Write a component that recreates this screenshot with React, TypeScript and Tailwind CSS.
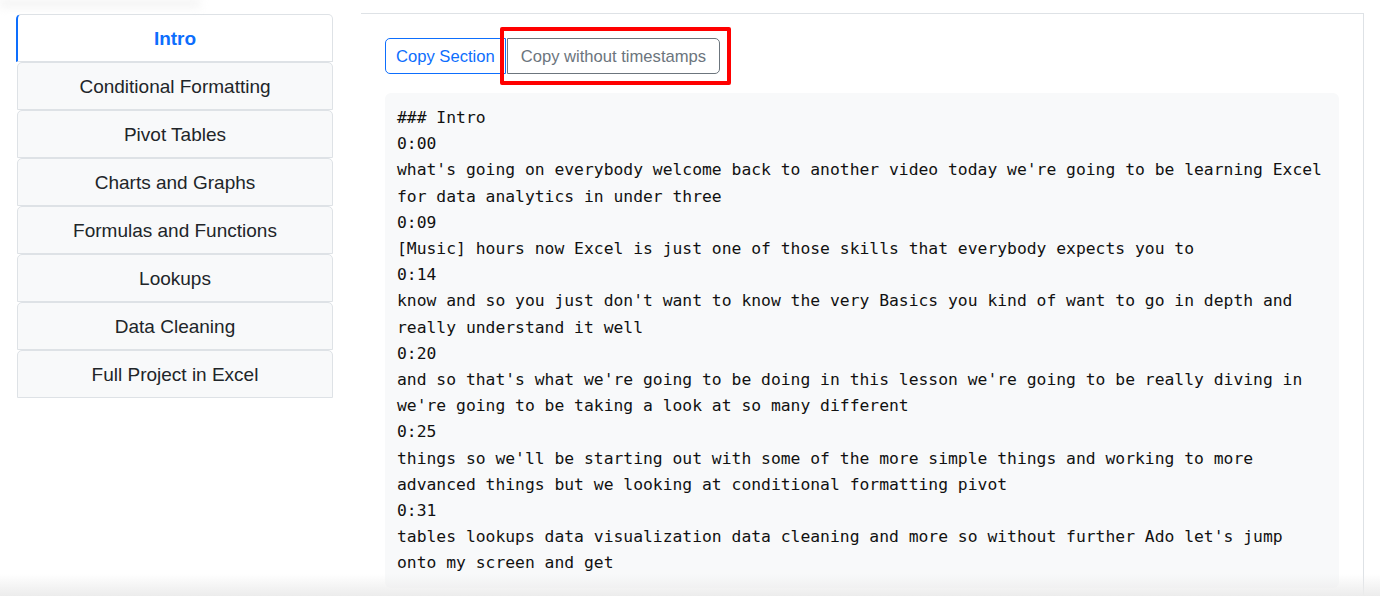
import { useState } from "react";

const sections = [
  "Intro",
  "Conditional Formatting",
  "Pivot Tables",
  "Charts and Graphs",
  "Formulas and Functions",
  "Lookups",
  "Data Cleaning",
  "Full Project in Excel",
];

const transcript = `### Intro
0:00
what's going on everybody welcome back to another video today we're going to be learning Excel
for data analytics in under three
0:09
[Music] hours now Excel is just one of those skills that everybody expects you to
0:14
know and so you just don't want to know the very Basics you kind of want to go in depth and
really understand it well
0:20
and so that's what we're going to be doing in this lesson we're going to be really diving in
we're going to be taking a look at so many different
0:25
things so we'll be starting out with some of the more simple things and working to more
advanced things but we looking at conditional formatting pivot
0:31
tables lookups data visualization data cleaning and more so without further Ado let's jump
onto my screen and get`;

export default function App() {
  const [active, setActive] = useState(0);

  return (
    <div className="relative h-[596px] overflow-hidden bg-white font-['Liberation_Sans',Arial,sans-serif] text-[#212529]">
      {/* faint framing shadows from the screenshot */}
      <div className="pointer-events-none absolute left-0 top-0 h-[10px] w-[200px] bg-gradient-to-b from-[#ececec] to-transparent blur-[4px]" />

      <div className="flex items-start gap-[28px] pl-[16px] pr-[16px] pt-[14px]">
        <nav className="flex w-[317px] shrink-0 flex-col">
          {sections.map((s, i) =>
            i === active ? (
              <button
                key={s}
                onClick={() => setActive(i)}
                className="flex h-[48px] items-center justify-center rounded-t-[5px] border border-l-2 border-[#dee2e6] border-l-[#0d6efd] bg-white pt-[2px] text-[19px] font-bold text-[#0d6efd]"
              >
                {s}
              </button>
            ) : (
              <button
                key={s}
                onClick={() => setActive(i)}
                className="ml-[1px] flex h-[48px] items-center justify-center rounded-t-[5px] border border-[#dee2e6] bg-[#f8f9fa] pt-[2px] text-[19px] text-[#212529]"
              >
                {s}
              </button>
            )
          )}
        </nav>

        <main className="-mt-[1px] min-h-[600px] flex-1 border-r border-t border-[#dee2e6] px-[24px] pt-[24px]">
          <div className="flex h-[36px]">
            <button className="rounded-l-[5px] border border-[#0d6efd] px-[10px] pt-[2px] text-[16.6px] text-[#0d6efd]">
              Copy Section
            </button>
            <div className="relative ml-[1px]">
              <button className="h-[36px] rounded-r-[5px] border border-[#6c757d] px-[13px] pt-[2px] text-[16.6px] text-[#6c757d]">
                Copy without timestamps
              </button>
              <div className="pointer-events-none absolute left-[-7px] top-[-11px] h-[58px] w-[231px] rounded-[2px] border-4 border-[#ff0000]" />
            </div>
          </div>

          <pre className="mt-[19px] whitespace-pre rounded-[6px] bg-[#f8f9fa] px-[12px] pb-[11px] pt-[12px] font-['DejaVu_Sans_Mono',monospace] text-[16.35px] leading-[26.2px] text-[#111]">
            {transcript}
          </pre>
        </main>
      </div>

      <div className="pointer-events-none absolute bottom-0 left-0 h-[22px] w-full bg-gradient-to-b from-transparent to-[#ececec]" />
    </div>
  );
}
